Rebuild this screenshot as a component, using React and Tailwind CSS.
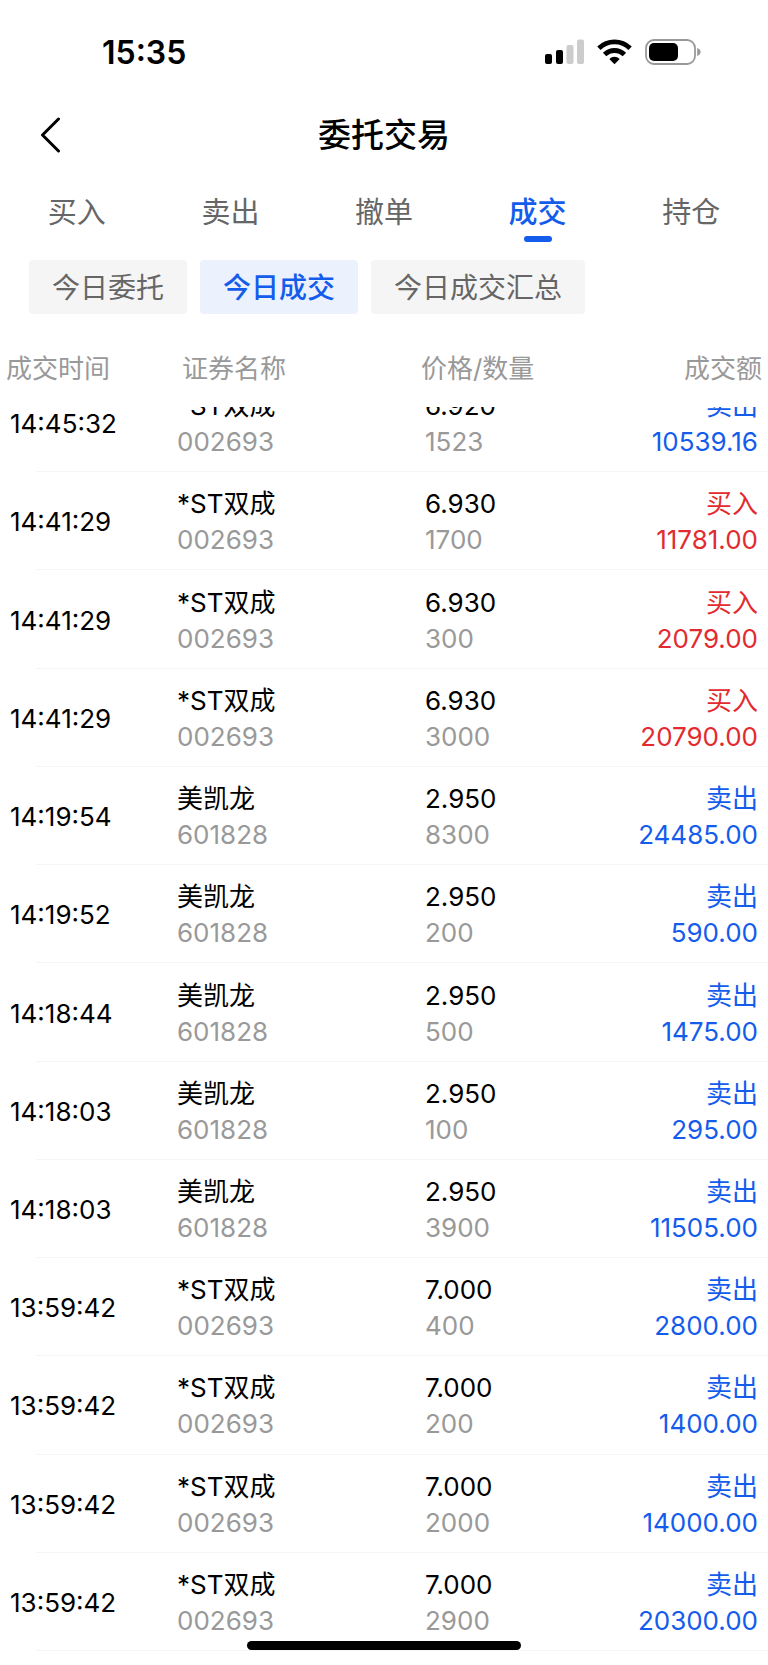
import React from "react";

const tabs = ["买入", "卖出", "撤单", "成交", "持仓"];
const filters = ["今日委托", "今日成交", "今日成交汇总"];

const ST = { name: "*ST双成", code: "002693" };
const MKL = { name: "美凯龙", code: "601828" };

const trades = [
  { time: "14:45:32", stock: ST, price: "6.920", qty: "1523", side: "卖出", amount: "10539.16" },
  { time: "14:41:29", stock: ST, price: "6.930", qty: "1700", side: "买入", amount: "11781.00" },
  { time: "14:41:29", stock: ST, price: "6.930", qty: "300", side: "买入", amount: "2079.00" },
  { time: "14:41:29", stock: ST, price: "6.930", qty: "3000", side: "买入", amount: "20790.00" },
  { time: "14:19:54", stock: MKL, price: "2.950", qty: "8300", side: "卖出", amount: "24485.00" },
  { time: "14:19:52", stock: MKL, price: "2.950", qty: "200", side: "卖出", amount: "590.00" },
  { time: "14:18:44", stock: MKL, price: "2.950", qty: "500", side: "卖出", amount: "1475.00" },
  { time: "14:18:03", stock: MKL, price: "2.950", qty: "100", side: "卖出", amount: "295.00" },
  { time: "14:18:03", stock: MKL, price: "2.950", qty: "3900", side: "卖出", amount: "11505.00" },
  { time: "13:59:42", stock: ST, price: "7.000", qty: "400", side: "卖出", amount: "2800.00" },
  { time: "13:59:42", stock: ST, price: "7.000", qty: "200", side: "卖出", amount: "1400.00" },
  { time: "13:59:42", stock: ST, price: "7.000", qty: "2000", side: "卖出", amount: "14000.00" },
  { time: "13:59:42", stock: ST, price: "7.000", qty: "2900", side: "卖出", amount: "20300.00" },
];

function StatusBar() {
  return (
    <div className="flex h-[104px] items-center justify-between pl-[102px] pr-[67px]">
      <span className="pt-[2px] text-[32px] font-semibold leading-10">15:35</span>
      <div className="flex items-center gap-[13px]">
        <svg width="39" height="26" viewBox="0 0 39 26" aria-hidden="true">
          <rect x="0" y="15" width="7" height="10" rx="2" fill="#000" />
          <rect x="11" y="11" width="7" height="14" rx="2" fill="#000" />
          <rect x="21.5" y="6" width="7" height="19" rx="2" fill="#ccc" />
          <rect x="32" y="0.5" width="7" height="24.5" rx="2" fill="#ccc" />
        </svg>
        <svg width="35" height="26" viewBox="0 0 35 26" aria-hidden="true">
          <g fill="none" stroke="#000" strokeWidth="4.8">
            <path d="M1.9 9.3a22.4 22.4 0 0 1 31.2 0" />
            <path d="M7.6 15.5a14.2 14.2 0 0 1 19.8 0" />
          </g>
          <path d="M17.5 25.3l-5.2-5.3a7.4 7.4 0 0 1 10.4 0z" fill="#000" />
        </svg>
        <svg width="56" height="26" viewBox="0 0 56 26" aria-hidden="true">
          <rect x="1" y="1" width="49" height="24" rx="8" fill="none" stroke="#999" strokeWidth="1.8" />
          <rect x="4" y="4" width="29" height="18" rx="5" fill="#000" />
          <path d="M52.2 9c2.3.8 3.4 2.2 3.4 4s-1.1 3.2-3.4 4z" fill="#999" />
        </svg>
      </div>
    </div>
  );
}

export default function App() {
  return (
    <div className="relative flex min-h-screen flex-col overflow-hidden bg-white font-['Inter','Noto_Sans_CJK_SC',sans-serif] text-black">
      <StatusBar />

      <header className="grid h-[62px] grid-cols-[1fr_auto_1fr] items-center">
        <button type="button" aria-label="返回" className="ml-10 w-6">
          <svg width="22" height="36" viewBox="0 0 22 36" fill="none" stroke="#000" strokeWidth="3" strokeLinecap="round" strokeLinejoin="round" aria-hidden="true">
            <path d="M18.5 2L2.5 18l16 16" />
          </svg>
        </button>
        <h1 className="text-[33px] font-medium leading-10">委托交易</h1>
      </header>

      <nav className="grid h-[94px] grid-cols-5 pt-[25px]">
        {tabs.map((t) => {
          const active = t === "成交";
          return (
            <button
              key={t}
              type="button"
              aria-current={active ? "page" : undefined}
              className={`flex flex-col items-center gap-px self-start text-[29px] leading-[44px] ${active ? "font-medium text-[#145cec]" : "text-[#666]"}`}
            >
              {t}
              {active && <span className="h-[6px] w-7 rounded-full bg-[#145cec]" />}
            </button>
          );
        })}
      </nav>

      <div className="flex gap-[13px] pl-[29px]">
        {filters.map((f) => (
          <button
            key={f}
            type="button"
            className={`h-[54px] rounded px-[23px] pt-[2px] text-[28px] leading-10 ${
              f === "今日成交" ? "bg-[#ebf1fd] font-medium text-[#145cec]" : "bg-[#f5f5f5] text-[#666]"
            }`}
          >
            {f}
          </button>
        ))}
      </div>

      <table className="flex flex-1 flex-col text-[26px] leading-9">
        <thead className="block">
          <tr className="grid h-[93px] grid-cols-[176fr_239fr_171fr_170fr] px-[6px] pt-[37px] text-[#999]">
            <th className="text-left font-normal">成交时间</th>
            <th className="text-left font-normal">证券名称</th>
            <th className="text-left font-normal">价格/数量</th>
            <th className="text-right font-normal">成交额</th>
          </tr>
        </thead>
        <tbody className="flex flex-1 flex-col overflow-hidden pb-[14px]">
          {trades.map((t, i) => {
            const sideColor = t.side === "买入" ? "text-[#e22b30]" : "text-[#145cec]";
            return (
              <tr
                key={i}
                className="ml-9 grid min-h-[98px] flex-1 grid-cols-[141fr_248fr_166fr_167fr] items-center border-b border-[#f5f5f5] pr-[10px] pt-[3px] first:-mt-[33px]"
              >
                <td className="-ml-[26px] whitespace-nowrap">{t.time}</td>
                <td>
                  <div>{t.stock.name}</div>
                  <div className="text-[#999]">{t.stock.code}</div>
                </td>
                <td>
                  <div>{t.price}</div>
                  <div className="text-[#999]">{t.qty}</div>
                </td>
                <td className={`text-right ${sideColor}`}>
                  <div>{t.side}</div>
                  <div>{t.amount}</div>
                </td>
              </tr>
            );
          })}
        </tbody>
      </table>

      <div className="absolute bottom-[15px] left-1/2 h-[9px] w-[274px] -translate-x-1/2 rounded-full bg-black" />
    </div>
  );
}
